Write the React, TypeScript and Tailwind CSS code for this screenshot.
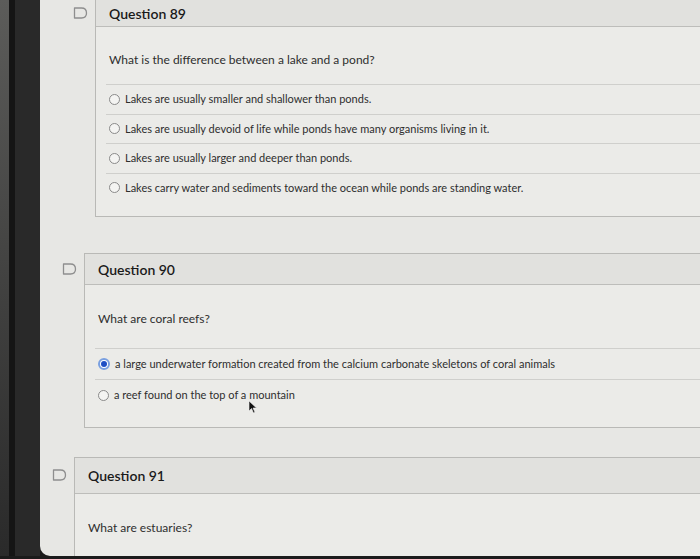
import React from "react";

type Option = { label: string; selected?: boolean };

type QuestionCardProps = {
  number: number;
  prompt: string;
  options?: Option[];
  indent: string;
  headerHeight: string;
  bodyTop: string;
  promptGap: string;
  rowHeight: string;
  bottomPad: string;
};

const FlagIcon = () => (
  <svg width="15" height="12" viewBox="0 0 15 12" className="shrink-0">
    <path
      d="M1.5 1 H8.5 Q13.5 1 13.5 6 Q13.5 11 8.5 11 H1.5 Z"
      fill="none"
      stroke="#8e8e8e"
      strokeWidth="1.3"
      strokeLinejoin="round"
    />
  </svg>
);

const Radio = ({ selected }: { selected?: boolean }) =>
  selected ? (
    <span className="w-[12px] h-[12px] rounded-full border-2 border-[#7aa0e0] bg-white flex items-center justify-center shrink-0">
      <span className="w-[6px] h-[6px] rounded-full bg-[#1f4fc4]" />
    </span>
  ) : (
    <span className="w-[11px] h-[11px] rounded-full border border-[#8a8a8a] bg-[#f4f4f2] shrink-0" />
  );

const QuestionCard = ({
  number,
  prompt,
  options = [],
  indent,
  headerHeight,
  bodyTop,
  promptGap,
  rowHeight,
  bottomPad,
}: QuestionCardProps) => (
  <div className={`shrink-0 flex items-start ${indent}`}>
    <div className={`w-[22px] flex items-center ${headerHeight}`}>
      <FlagIcon />
    </div>
    <div className="flex-1 border border-r-0 border-[#b9b9b6] bg-[#ebebe8]">
      <div
        className={`${headerHeight} flex items-center pl-[13px] bg-[#e1e1de] border-b border-[#bdbdba]`}
      >
        <h3 className="text-[14px] font-semibold text-[#1a1a1a]">
          Question {number}
        </h3>
      </div>
      <div className={`${bodyTop} ${bottomPad}`}>
        <p className={`pl-[13px] text-[12px] leading-[18px] text-[#2e2e2e] ${promptGap}`}>
          {prompt}
        </p>
        {options.length > 0 && (
          <ul className="ml-[10px]">
            {options.map((o) => (
              <li
                key={o.label}
                className={`${rowHeight} flex items-center gap-[5px] pl-[3px] border-t border-[#cfcfcc] text-[11px] text-[#2e2e2e]`}
              >
                <Radio selected={o.selected} />
                <span>{o.label}</span>
              </li>
            ))}
          </ul>
        )}
      </div>
    </div>
  </div>
);

const Cursor = () => (
  <svg
    width="10"
    height="14"
    viewBox="0 0 10 14"
    className="absolute left-[208px] top-[400px]"
  >
    <path d="M1 1 L1 11 L3.5 8.5 L5.5 13 L7 12.3 L5 8 L8.5 8 Z" fill="#111" stroke="#f0f0f0" strokeWidth="0.6" />
  </svg>
);

export default function App() {
  return (
    <div className="w-[700px] h-[559px] overflow-hidden flex flex-col bg-[#1b1b1b] font-['Lato','Open_Sans',sans-serif]">
      <div className="h-[556px] flex shrink-0">
        <div className="w-[40px] shrink-0 flex">
          <div className="w-[9px] bg-gradient-to-b from-[#5c5c5a] to-[#2a2a2a]" />
          <div className="w-[6px] bg-[#151515]" />
          <div className="flex-1 bg-[#292929]" />
        </div>
        <main className="relative flex-1 overflow-hidden bg-[#e7e7e4] rounded-bl-[10px] flex flex-col">
          <QuestionCard
            number={89}
            prompt="What is the difference between a lake and a pond?"
            indent="pl-[33px] -mt-px"
            headerHeight="h-[27px]"
            bodyTop="pt-[24px]"
            promptGap="mb-[15px]"
            rowHeight="h-[29.5px]"
            bottomPad="pb-[14px]"
            options={[
              { label: "Lakes are usually smaller and shallower than ponds." },
              { label: "Lakes are usually devoid of life while ponds have many organisms living in it." },
              { label: "Lakes are usually larger and deeper than ponds." },
              { label: "Lakes carry water and sediments toward the ocean while ponds are standing water." },
            ]}
          />
          <div className="h-[36px] shrink-0" />
          <QuestionCard
            number={90}
            prompt="What are coral reefs?"
            indent="pl-[22px]"
            headerHeight="h-[31px]"
            bodyTop="pt-[25px]"
            promptGap="mb-[20px]"
            rowHeight="h-[31px]"
            bottomPad="pb-[17px]"
            options={[
              {
                label:
                  "a large underwater formation created from the calcium carbonate skeletons of coral animals",
                selected: true,
              },
              { label: "a reef found on the top of a mountain" },
            ]}
          />
          <div className="h-[29px] shrink-0" />
          <QuestionCard
            number={91}
            prompt="What are estuaries?"
            indent="pl-[12px]"
            headerHeight="h-[36px]"
            bodyTop="pt-[25px]"
            promptGap="mb-[20px]"
            rowHeight="h-[31px]"
            bottomPad="pb-[15px]"
          />
          <Cursor />
        </main>
      </div>
    </div>
  );
}
